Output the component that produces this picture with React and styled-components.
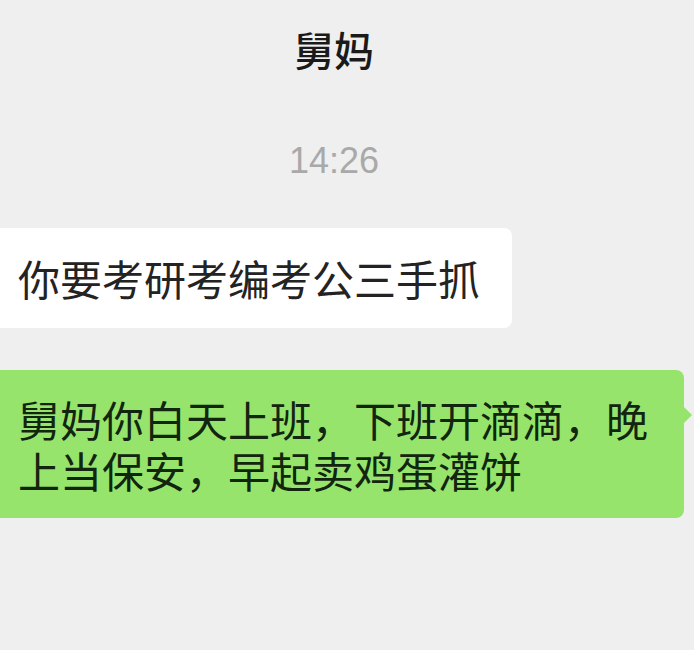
import React from "react";
import styled, { createGlobalStyle } from "styled-components";

const GlobalStyle = createGlobalStyle`
    html, body {
        margin: 0;
        padding: 0;
        background: #efefef;
    }
    body {
        font-family: "Noto Sans CJK SC", "Liberation Sans", sans-serif;
    }
`;

const messages = [
    { id: 1, mine: false, text: "你要考研考编考公三手抓" },
    {
        id: 2,
        mine: true,
        text: "舅妈你白天上班，下班开滴滴，晚上当保安，早起卖鸡蛋灌饼",
    },
];

const App = () => {
    return (
        <Screen>
            <GlobalStyle />
            <TitleBar>
                <Title>舅妈</Title>
            </TitleBar>
            <TimeStamp>14:26</TimeStamp>
            <MessageList>
                {messages.map((m) =>
                    m.mine ? (
                        <SentBubble key={m.id}>{m.text}</SentBubble>
                    ) : (
                        <ReceivedBubble key={m.id}>{m.text}</ReceivedBubble>
                    )
                )}
            </MessageList>
        </Screen>
    );
};

const Screen = styled.div`
    width: 694px;
    height: 650px;
    overflow: hidden;
    background: #efefef;
    display: flex;
    flex-direction: column;
`;

const TitleBar = styled.div`
    display: flex;
    justify-content: center;
    padding: 21px 26px 0 0;
    height: 59px;
`;

const Title = styled.h1`
    margin: 0;
    font-size: 40px;
    line-height: 56px;
    font-weight: 500;
    color: #1a1a1a;
`;

const TimeStamp = styled.div`
    margin-top: 61px;
    padding-right: 26px;
    text-align: center;
    font-family: "Liberation Sans", "Noto Sans", sans-serif;
    font-size: 36px;
    line-height: 40px;
    color: #a9a9a9;
`;

const MessageList = styled.div`
    display: flex;
    flex-direction: column;
    align-items: flex-start;
    gap: 42px;
    margin-top: 47px;
`;

const Bubble = styled.div`
    position: relative;
    font-size: 42px;
    line-height: 51px;
    border-radius: 0 8px 8px 0;
    box-sizing: border-box;
`;

const ReceivedBubble = styled(Bubble)`
    width: 512px;
    padding: 24px 20px 25px 18px;
    background: #ffffff;
    color: #232323;
`;

const SentBubble = styled(Bubble)`
    width: 684px;
    padding: 23px 24px 23px 18px;
    background: #96e46b;
    color: #12250f;

    &::after {
        content: "";
        position: absolute;
        right: -8px;
        top: 37px;
        border-top: 8px solid transparent;
        border-bottom: 8px solid transparent;
        border-left: 8px solid #96e46b;
    }
`;

export default App;
